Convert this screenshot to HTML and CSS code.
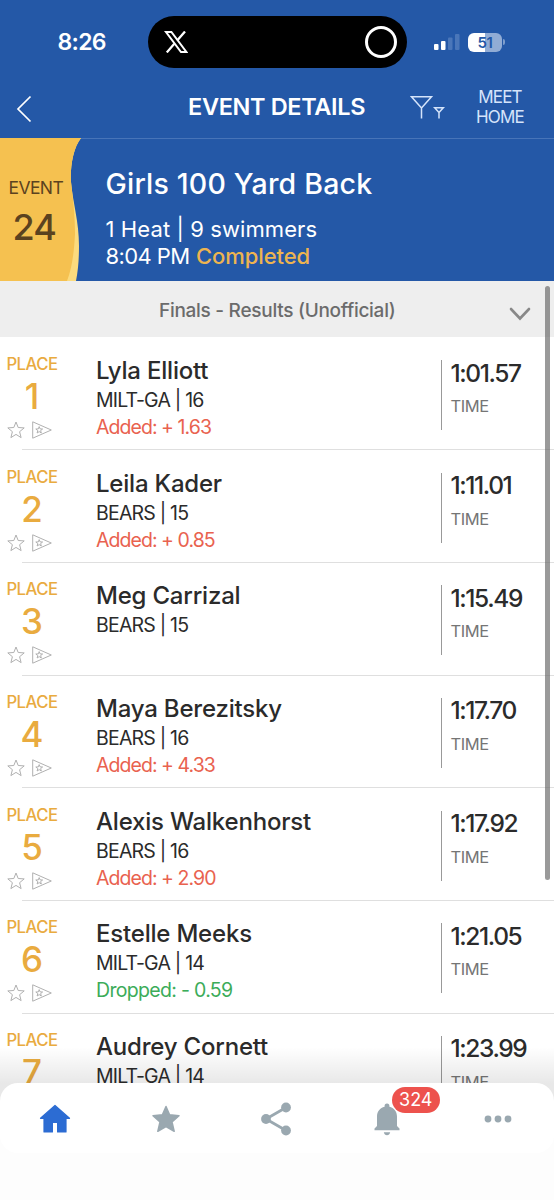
FILE: index.html
```html
<!DOCTYPE html>
<html lang="en">
<head>
    <meta charset="UTF-8">
    <meta name="viewport" content="width=device-width, initial-scale=1.0">
    <title>Event Details</title>
    <link rel="stylesheet" href="styles.css">
</head>
<body>
    <svg class="symbols" aria-hidden="true">
        <symbol id="star" viewBox="0 0 18 18">
            <path d="M9 1l2.200 5.500 6 .4-4.600 3.800 1.500 5.900L9 13.400l-5.100 3.200 1.500-5.900L.8 6.900l6-.4z"/>
        </symbol>
        <symbol id="flag" viewBox="0 0 20 18">
            <path d="M.7.8v16.400L19.300 9z"/>
            <path d="M7.200 5.600l.9 2.300 2.500.1-2 1.600.7 2.400-2.100-1.400L5.100 12l.7-2.400-2-1.600 2.500-.1z"/>
        </symbol>
    </svg>

    <div class="screen">
        <header class="top">
            <div class="status-bar">
                <span class="clock">8:26</span>
                <div class="island">
                    <svg class="x-logo" width="24" height="22" viewBox="0 0 24 22">
                        <path d="M2 1h5.400l15 20H17z" fill="none" stroke="#fff" stroke-width="2"/>
                        <path d="M21 .5L13.200 9.500M10.300 12.700L2.800 21.400" fill="none" stroke="#fff" stroke-width="2.300"/>
                    </svg>
                    <span class="ring"></span>
                </div>
                <svg class="signal" width="27" height="18" viewBox="0 0 27 18">
                    <rect x="0" y="11" width="4.500" height="6" rx="1" fill="#fff"/>
                    <rect x="7" y="8" width="4.500" height="9" rx="1" fill="#fff"/>
                    <rect x="14" y="4.500" width="4.500" height="12.500" rx="1" fill="#4a76b9"/>
                    <rect x="21" y="1" width="4.500" height="16" rx="1" fill="#4a76b9"/>
                </svg>
                <div class="battery">51</div>
            </div>
            <nav class="nav-bar">
                <svg class="back" width="16" height="28" viewBox="0 0 16 28">
                    <path d="M14.500 1.500L2 14l12.500 12.500" fill="none" stroke="#fff" stroke-width="1.700"/>
                </svg>
                <h1>EVENT DETAILS</h1>
                <svg class="filter" width="35" height="25" viewBox="0 0 35 25">
                    <g fill="none" stroke="#d5e4fb" stroke-width="1.500">
                        <path d="M11.500 23.500V13L1.500 1.800h20L11.500 13"/>
                        <path d="M29 23.500v-6l-4.300-4.700h8.600L29 17.500"/>
                    </g>
                </svg>
                <a class="meet-home">MEET<br>HOME</a>
            </nav>
        </header>

        <section class="event">
            <svg class="wave" width="84" height="143" viewBox="0 0 84 143">
                <path d="M0 0h81C73 10 70 30 71 44c2 22 8 39 8 64 0 14-1 25-3 35H0z" fill="#fbdb7e"/>
                <path d="M0 0h81C73 10 70 30 71 44c2 18 4 32 4 52-1 19-3 34-8 47H0z" fill="#f5c150"/>
            </svg>
            <div class="event-number">
                <span>EVENT</span>
                <strong>24</strong>
            </div>
            <div class="event-info">
                <h2>Girls 100 Yard Back</h2>
                <p class="heats">1 Heat | 9 swimmers</p>
                <p class="when">8:04 PM <span>Completed</span></p>
            </div>
        </section>

        <div class="round">
            <span>Finals - Results (Unofficial)</span>
            <svg width="22" height="14" viewBox="0 0 22 14">
                <path d="M2 2l9 9.500L20 2" fill="none" stroke="#888" stroke-width="2.600" stroke-linecap="round"/>
            </svg>
        </div>

        <ul class="results">
            <li>
                <div class="place"><span>PLACE</span><b>1</b><div class="marks"><svg><use href="#star"/></svg><svg class="flag"><use href="#flag"/></svg></div></div>
                <div class="swimmer"><h3>Lyla Elliott</h3><p>MILT-GA | 16</p><p class="added">Added: + 1.63</p></div>
                <div class="time"><b>1:01.57</b><span>TIME</span></div>
            </li>
            <li>
                <div class="place"><span>PLACE</span><b>2</b><div class="marks"><svg><use href="#star"/></svg><svg class="flag"><use href="#flag"/></svg></div></div>
                <div class="swimmer"><h3>Leila Kader</h3><p>BEARS | 15</p><p class="added">Added: + 0.85</p></div>
                <div class="time"><b>1:11.01</b><span>TIME</span></div>
            </li>
            <li>
                <div class="place"><span>PLACE</span><b>3</b><div class="marks"><svg><use href="#star"/></svg><svg class="flag"><use href="#flag"/></svg></div></div>
                <div class="swimmer"><h3>Meg Carrizal</h3><p>BEARS | 15</p></div>
                <div class="time"><b>1:15.49</b><span>TIME</span></div>
            </li>
            <li>
                <div class="place"><span>PLACE</span><b>4</b><div class="marks"><svg><use href="#star"/></svg><svg class="flag"><use href="#flag"/></svg></div></div>
                <div class="swimmer"><h3>Maya Berezitsky</h3><p>BEARS | 16</p><p class="added">Added: + 4.33</p></div>
                <div class="time"><b>1:17.70</b><span>TIME</span></div>
            </li>
            <li>
                <div class="place"><span>PLACE</span><b>5</b><div class="marks"><svg><use href="#star"/></svg><svg class="flag"><use href="#flag"/></svg></div></div>
                <div class="swimmer"><h3>Alexis Walkenhorst</h3><p>BEARS | 16</p><p class="added">Added: + 2.90</p></div>
                <div class="time"><b>1:17.92</b><span>TIME</span></div>
            </li>
            <li>
                <div class="place"><span>PLACE</span><b>6</b><div class="marks"><svg><use href="#star"/></svg><svg class="flag"><use href="#flag"/></svg></div></div>
                <div class="swimmer"><h3>Estelle Meeks</h3><p>MILT-GA | 14</p><p class="dropped">Dropped: - 0.59</p></div>
                <div class="time"><b>1:21.05</b><span>TIME</span></div>
            </li>
            <li>
                <div class="place"><span>PLACE</span><b>7</b></div>
                <div class="swimmer"><h3>Audrey Cornett</h3><p>MILT-GA | 14</p></div>
                <div class="time"><b>1:23.99</b><span>TIME</span></div>
            </li>
        </ul>

        <div class="scrollbar"></div>

        <footer class="bottom">
            <nav class="tabs">
                <a class="active">
                    <svg width="32" height="30" viewBox="0 0 32 30">
                        <path d="M16 1.500l14.500 12.800H27V28h-8.400V18.400h-5.200V28H5V14.300H1.500z" fill="currentColor" stroke="currentColor" stroke-width="1.200" stroke-linejoin="round"/>
                    </svg>
                </a>
                <a>
                    <svg width="30" height="30" viewBox="0 0 30 30">
                        <path d="M15 2.500l3.600 8.200 9.400 1-7 6.200 2.200 9.400L15 22.700l-8.200 4.600L9 17.900l-7-6.200 9.400-1z" fill="currentColor" stroke="currentColor" stroke-width="1.500" stroke-linejoin="round"/>
                    </svg>
                </a>
                <a>
                    <svg width="32" height="34" viewBox="0 0 32 34">
                        <path d="M26 5.500L6 17l20 11.500" fill="none" stroke="currentColor" stroke-width="2.800"/>
                        <circle cx="26" cy="5.500" r="4.900" fill="currentColor"/>
                        <circle cx="6" cy="17" r="4.900" fill="currentColor"/>
                        <circle cx="26" cy="28.500" r="4.900" fill="currentColor"/>
                    </svg>
                </a>
                <a>
                    <svg class="bell" width="26" height="33" viewBox="0 0 26 33">
                        <path d="M13 .5a2.400 2.400 0 0 1 2.400 2.500v.8C20 5 23 8.500 23 13.500V23l2.500 2.500v1.800H.5v-1.800L3 23v-9.500c0-5 3-8.500 7.600-9.700V3A2.400 2.400 0 0 1 13 .5zM9.800 29.300h6.400c-.4 1.900-1.600 3-3.200 3s-2.800-1.100-3.200-3z" fill="currentColor"/>
                    </svg>
                    <span class="badge">324</span>
                </a>
                <a>
                    <svg width="28" height="8" viewBox="0 0 28 8">
                        <g fill="currentColor"><circle cx="4" cy="4" r="3.400"/><circle cx="14" cy="4" r="3.400"/><circle cx="24" cy="4" r="3.400"/></g>
                    </svg>
                </a>
            </nav>
        </footer>
    </div>
</body>
</html>
```
FILE: styles.css
```css
* {
    box-sizing: border-box;
}

body {
    margin: 0;
    font-family: Inter, "Liberation Sans", sans-serif;
    color: #2b2b2b;
    background: #fff;
    overflow: hidden;
}

h1, h2, h3, p, ul {
    margin: 0;
    padding: 0;
}

svg {
    display: block;
    flex-shrink: 0;
}

.symbols {
    position: absolute;
    width: 0;
    height: 0;
}

.screen {
    position: relative;
    width: 554px;
    height: 1200px;
    overflow: hidden;
}

.top {
    height: 138px;
    background: #2458a7;
    color: #fff;
}

.status-bar {
    display: flex;
    align-items: center;
    height: 84px;
    padding-left: 57.5px;
}

.clock {
    width: 90.5px;
    font-size: 23px;
    font-weight: 600;
    letter-spacing: -0.7px;
}

.island {
    display: flex;
    align-items: center;
    justify-content: space-between;
    width: 259px;
    height: 52px;
    padding: 0 10px 0 16px;
    border-radius: 26px;
    background: #000;
}

.ring {
    width: 32px;
    height: 32px;
    border: 3px solid #fff;
    border-radius: 50%;
}

.signal {
    margin-left: 27px;
}

.battery {
    position: relative;
    width: 34px;
    height: 19px;
    margin-left: 7px;
    border-radius: 6px;
    background: linear-gradient(90deg, #fff 51%, #91acd5 51%);
    color: #2458a7;
    font-size: 15px;
    font-weight: 600;
    line-height: 19px;
    letter-spacing: -0.5px;
    text-align: center;
}

.battery::after {
    content: "";
    position: absolute;
    top: 6px;
    right: -3px;
    width: 2px;
    height: 6px;
    border-radius: 0 2px 2px 0;
    background: #7e9ecd;
}

.nav-bar {
    display: flex;
    align-items: center;
    height: 47px;
    padding-left: 16px;
}

.back {
    margin-top: 3px;
}

.nav-bar h1 {
    width: 180px;
    margin-left: 156px;
    margin-top: -2px;
    font-size: 23.5px;
    font-weight: 600;
    line-height: 46px;
    letter-spacing: -0.35px;
    white-space: nowrap;
}

.filter {
    margin-left: 42px;
    margin-top: -1px;
}

.meet-home {
    width: 60px;
    margin-left: 25px;
    color: #d5e4fb;
    font-size: 17px;
    line-height: 19.5px;
    letter-spacing: -0.8px;
    text-align: center;
}

.event {
    position: relative;
    display: flex;
    height: 143px;
    border-top: 1px solid #4774b8;
    background: #2458a7;
    color: #fff;
}

.wave {
    position: absolute;
    top: -1px;
    left: 0;
}

.event-number {
    position: relative;
    display: flex;
    flex-direction: column;
    width: 105.5px;
    padding: 36px 0 0 8.5px;
    color: #5b421f;
}

.event-number span {
    font-size: 17.5px;
    line-height: 26px;
    letter-spacing: -0.6px;
}

.event-number strong {
    padding-left: 4px;
    font-size: 36px;
    font-weight: 550;
    line-height: 52px;
    letter-spacing: -0.8px;
}

.event-info {
    padding-top: 27px;
    white-space: nowrap;
}

.event-info h2 {
    font-size: 28.5px;
    font-weight: 550;
    line-height: 36px;
    letter-spacing: 0.2px;
}

.event-info p {
    font-size: 22px;
    line-height: 27px;
}

.event-info .heats {
    margin-top: 14px;
    letter-spacing: 0.1px;
}

.event-info .when {
    letter-spacing: -0.6px;
}

.when span {
    margin-left: 1px;
    color: #edb450;
    font-weight: 500;
    letter-spacing: -0.1px;
}

.round {
    display: flex;
    align-items: center;
    justify-content: flex-end;
    height: 56px;
    padding-right: 23px;
    background: #eee;
    color: #6b6b6b;
    font-size: 19px;
    font-weight: 500;
    letter-spacing: -0.28px;
    white-space: nowrap;
}

.round span {
    width: 237px;
    margin-right: 113px;
    margin-top: 2px;
}

.round svg {
    margin-top: 9px;
}

.results {
    list-style: none;
}

.results li {
    position: relative;
    display: grid;
    grid-template-columns: 96px 344.5px 1fr;
    height: 112.67px;
}

.results li::after {
    content: "";
    position: absolute;
    left: 22px;
    right: 0;
    bottom: -0.6px;
    height: 1px;
    background: #dfdfdf;
}

.place {
    display: flex;
    flex-direction: column;
    align-items: center;
    width: 64px;
    padding-top: 15px;
    color: #e9ab3f;
}

.place span {
    font-size: 16.7px;
    font-weight: 500;
    line-height: 24px;
    letter-spacing: -0.5px;
}

.place b {
    font-size: 35px;
    font-weight: 550;
    line-height: 40px;
}

.marks {
    display: flex;
    align-items: center;
    gap: 7px;
    height: 28px;
    margin-left: -6px;
    fill: none;
    stroke: #b0b0b0;
    stroke-width: 1;
}

.marks svg {
    width: 18px;
    height: 18px;
}

.marks .flag {
    width: 20px;
}

.swimmer {
    padding-top: 20px;
    white-space: nowrap;
}

.swimmer h3 {
    font-size: 24px;
    font-weight: 550;
    line-height: 28px;
    letter-spacing: -0.2px;
    margin-bottom: 2px;
}

.swimmer p {
    font-size: 19.5px;
    line-height: 27px;
    letter-spacing: -0.8px;
}

.swimmer .added {
    color: #e9624f;
    letter-spacing: -0.95px;
}

.swimmer .dropped {
    color: #3cac59;
    letter-spacing: -0.68px;
}

.time {
    display: flex;
    flex-direction: column;
    align-self: start;
    height: 70px;
    margin-top: 23px;
    padding-left: 9px;
    border-left: 1px solid #999;
}

.time b {
    margin-top: -4.5px;
    font-size: 24.5px;
    font-weight: 550;
    line-height: 34px;
    letter-spacing: -1.4px;
}

.time span {
    margin-top: -0.5px;
    color: #757575;
    font-size: 16.5px;
    line-height: 34px;
    letter-spacing: -0.4px;
}

.scrollbar {
    position: absolute;
    top: 286px;
    right: 4px;
    width: 5px;
    height: 594px;
    border-radius: 3px;
    background: rgba(100, 100, 100, 0.65);
}

/* tab bar floats over the end of the list */
.bottom {
    position: absolute;
    left: 0;
    right: 0;
    bottom: 0;
    height: 117px;
    background: linear-gradient(transparent 30px, #fdfdfd 30px);
}

.bottom::before {
    content: "";
    position: absolute;
    top: -36px;
    left: 0;
    right: 0;
    height: 66px;
    background: linear-gradient(rgba(0, 0, 0, 0), rgba(0, 0, 0, 0.09) 36px);
}

.tabs {
    position: relative;
    display: grid;
    grid-template-columns: repeat(5, 110.6px);
    height: 70px;
    border-radius: 18px;
    background: #fff;
    color: #9aa8b0;
}

.tabs a {
    position: relative;
    display: flex;
    align-items: center;
    justify-content: center;
    padding-top: 2px;
}

.tabs .active {
    color: #2c6cd3;
}

.badge {
    position: absolute;
    top: 4px;
    left: 60px;
    width: 48px;
    height: 26px;
    border-radius: 13px;
    background: #ed524d;
    color: #fff;
    font-size: 18px;
    line-height: 26px;
    text-align: center;
}
```
